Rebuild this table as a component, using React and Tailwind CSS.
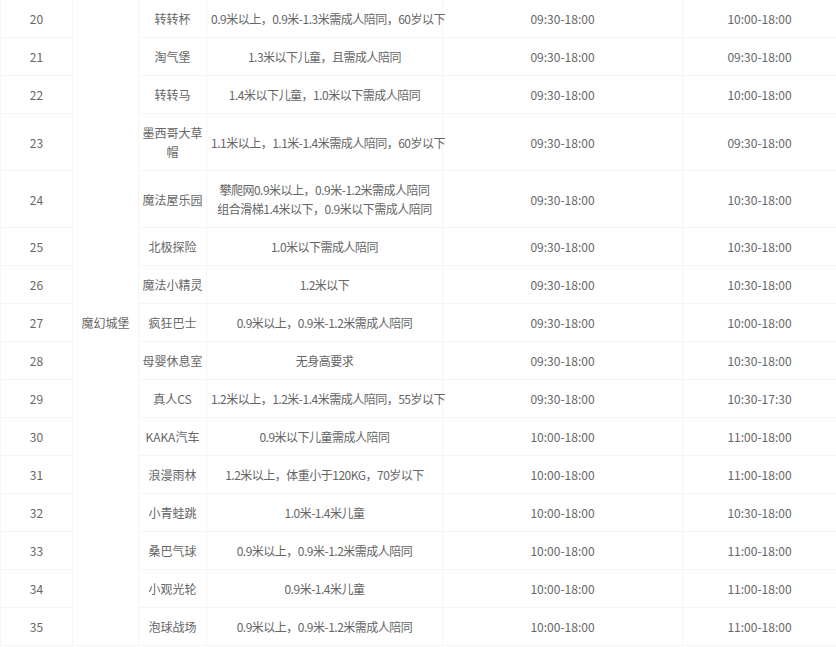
const rows = [
  ["20", "转转杯", ["0.9米以上，0.9米-1.3米需成人陪同，60岁以下"], "09:30-18:00", "10:00-18:00"],
  ["21", "淘气堡", ["1.3米以下儿童，且需成人陪同"], "09:30-18:00", "09:30-18:00"],
  ["22", "转转马", ["1.4米以下儿童，1.0米以下需成人陪同"], "09:30-18:00", "10:00-18:00"],
  ["23", "墨西哥大草帽", ["1.1米以上，1.1米-1.4米需成人陪同，60岁以下"], "09:30-18:00", "09:30-18:00"],
  ["24", "魔法屋乐园", ["攀爬网0.9米以上，0.9米-1.2米需成人陪同", "组合滑梯1.4米以下，0.9米以下需成人陪同"], "09:30-18:00", "10:30-18:00"],
  ["25", "北极探险", ["1.0米以下需成人陪同"], "09:30-18:00", "10:30-18:00"],
  ["26", "魔法小精灵", ["1.2米以下"], "09:30-18:00", "10:30-18:00"],
  ["27", "疯狂巴士", ["0.9米以上，0.9米-1.2米需成人陪同"], "09:30-18:00", "10:00-18:00"],
  ["28", "母婴休息室", ["无身高要求"], "09:30-18:00", "10:30-18:00"],
  ["29", "真人CS", ["1.2米以上，1.2米-1.4米需成人陪同，55岁以下"], "09:30-18:00", "10:30-17:30"],
  ["30", "KAKA汽车", ["0.9米以下儿童需成人陪同"], "10:00-18:00", "11:00-18:00"],
  ["31", "浪漫雨林", ["1.2米以上，体重小于120KG，70岁以下"], "10:00-18:00", "11:00-18:00"],
  ["32", "小青蛙跳", ["1.0米-1.4米儿童"], "10:00-18:00", "10:30-18:00"],
  ["33", "桑巴气球", ["0.9米以上，0.9米-1.2米需成人陪同"], "10:00-18:00", "11:00-18:00"],
  ["34", "小观光轮", ["0.9米-1.4米儿童"], "10:00-18:00", "11:00-18:00"],
  ["35", "泡球战场", ["0.9米以上，0.9米-1.2米需成人陪同"], "10:00-18:00", "11:00-18:00"],
];

const cell = "border border-[#f6f6f6] py-[9px] text-center align-middle";

export default function App() {
  return (
    <div className="w-[836px] h-[647px] overflow-hidden bg-white">
      <table
        className="-mt-px w-[836px] table-fixed border-collapse text-[12px] leading-[19px] text-[#666666]"
        style={{ fontFamily: '"Noto Sans CJK SC", "Noto Sans", sans-serif' }}
      >
        <colgroup>
          <col className="w-[72px]" />
          <col className="w-[66px]" />
          <col className="w-[68px]" />
          <col className="w-[236px]" />
          <col className="w-[240px]" />
          <col className="w-[154px]" />
        </colgroup>
        <tbody>
          {rows.map(([no, name, req, t1, t2], i) => (
            <tr key={no}>
              <td className={`${cell} px-1`}>{no}</td>
              {i === 0 && (
                <td className={`${cell} px-1`} rowSpan={rows.length}>
                  魔幻城堡
                </td>
              )}
              <td className={`${cell} px-0`}>{name}</td>
              <td className={`${cell} px-1 whitespace-nowrap tracking-[-0.5px]`}>
                {req.map((line) => (
                  <div key={line}>{line}</div>
                ))}
              </td>
              <td className={`${cell} px-1`}>{t1}</td>
              <td className={`${cell} px-1`}>{t2}</td>
            </tr>
          ))}
        </tbody>
      </table>
    </div>
  );
}
